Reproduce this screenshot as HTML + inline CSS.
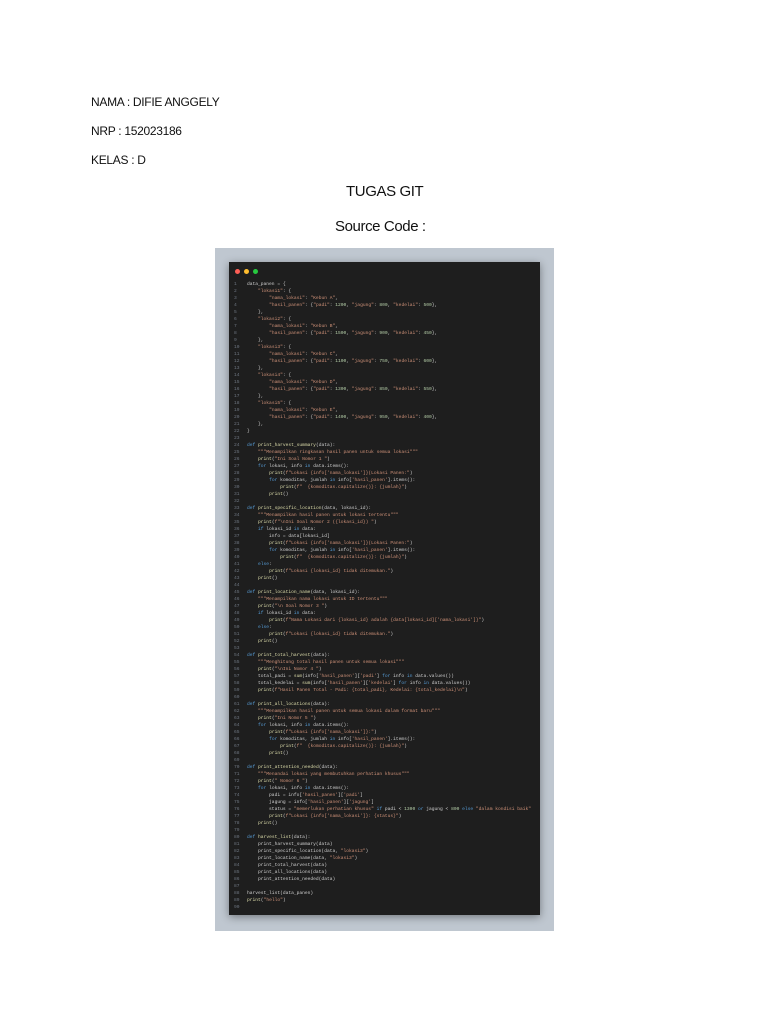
<!DOCTYPE html>
<html><head><meta charset="utf-8"><style>
body{margin:0;width:768px;height:1024px;background:#fff;position:relative;font-family:"Liberation Sans",sans-serif;overflow:hidden}
.t{position:absolute;color:#111;white-space:nowrap}
.frame{position:absolute;left:215px;top:248px;width:339px;height:683px;background:#bfc7d0}
.win{position:absolute;left:229px;top:262px;width:311px;height:653px;background:#1e1e1e;box-shadow:0 2px 8px rgba(0,0,0,.4)}
.dot{position:absolute;top:7px;width:5px;height:5px;border-radius:50%}
pre{position:absolute;left:5px;top:19px;margin:0;font-family:"Liberation Mono",monospace;font-size:4.6px;line-height:7px;color:#cfcfcf}
.n{color:#6e7681;display:inline-block;width:13px}
.k{color:#569cd6}.s{color:#ce9178}.m{color:#b5cea8}.f{color:#dcdcaa}.c{color:#6a9955}
</style></head><body>
<div class="t" style="left:91px;top:95px;font-size:12px;letter-spacing:-0.3px">NAMA : DIFIE ANGGELY</div>
<div class="t" style="left:91px;top:124px;font-size:12px;letter-spacing:-0.3px">NRP : 152023186</div>
<div class="t" style="left:91px;top:153px;font-size:12px;letter-spacing:-0.3px">KELAS : D</div>
<div class="t" style="left:346px;top:183px;font-size:15px;letter-spacing:-0.4px">TUGAS GIT</div>
<div class="t" style="left:335px;top:218px;font-size:15px;letter-spacing:-0.4px">Source Code :</div>
<div class="frame"></div>
<div class="win">
<div class="dot" style="left:6px;background:#ff5f56"></div>
<div class="dot" style="left:15px;background:#ffbd2e"></div>
<div class="dot" style="left:24px;background:#27c93f"></div>
<pre><span class="n">1</span>data_panen = {
<span class="n">2</span>    <span class="s">"lokasi1"</span>: {
<span class="n">3</span>        <span class="s">"nama_lokasi"</span>: <span class="s">"Kebun A"</span>,
<span class="n">4</span>        <span class="s">"hasil_panen"</span>: {<span class="s">"padi"</span>: <span class="m">1200</span>, <span class="s">"jagung"</span>: <span class="m">800</span>, <span class="s">"kedelai"</span>: <span class="m">500</span>},
<span class="n">5</span>    },
<span class="n">6</span>    <span class="s">"lokasi2"</span>: {
<span class="n">7</span>        <span class="s">"nama_lokasi"</span>: <span class="s">"Kebun B"</span>,
<span class="n">8</span>        <span class="s">"hasil_panen"</span>: {<span class="s">"padi"</span>: <span class="m">1500</span>, <span class="s">"jagung"</span>: <span class="m">900</span>, <span class="s">"kedelai"</span>: <span class="m">450</span>},
<span class="n">9</span>    },
<span class="n">10</span>    <span class="s">"lokasi3"</span>: {
<span class="n">11</span>        <span class="s">"nama_lokasi"</span>: <span class="s">"Kebun C"</span>,
<span class="n">12</span>        <span class="s">"hasil_panen"</span>: {<span class="s">"padi"</span>: <span class="m">1100</span>, <span class="s">"jagung"</span>: <span class="m">750</span>, <span class="s">"kedelai"</span>: <span class="m">600</span>},
<span class="n">13</span>    },
<span class="n">14</span>    <span class="s">"lokasi4"</span>: {
<span class="n">15</span>        <span class="s">"nama_lokasi"</span>: <span class="s">"Kebun D"</span>,
<span class="n">16</span>        <span class="s">"hasil_panen"</span>: {<span class="s">"padi"</span>: <span class="m">1300</span>, <span class="s">"jagung"</span>: <span class="m">850</span>, <span class="s">"kedelai"</span>: <span class="m">550</span>},
<span class="n">17</span>    },
<span class="n">18</span>    <span class="s">"lokasi5"</span>: {
<span class="n">19</span>        <span class="s">"nama_lokasi"</span>: <span class="s">"Kebun E"</span>,
<span class="n">20</span>        <span class="s">"hasil_panen"</span>: {<span class="s">"padi"</span>: <span class="m">1400</span>, <span class="s">"jagung"</span>: <span class="m">950</span>, <span class="s">"kedelai"</span>: <span class="m">400</span>},
<span class="n">21</span>    },
<span class="n">22</span>}
<span class="n">23</span>
<span class="n">24</span><span class="k">def</span> <span class="f">print_harvest_summary</span>(data):
<span class="n">25</span>    <span class="s">"""Menampilkan ringkasan hasil panen untuk semua lokasi"""</span>
<span class="n">26</span>    <span class="f">print</span>(<span class="s">"Ini Soal Nomor 1 "</span>)
<span class="n">27</span>    <span class="k">for</span> lokasi, info <span class="k">in</span> data.items():
<span class="n">28</span>        <span class="f">print</span>(<span class="s">f"Lokasi {info['nama_lokasi']}(Lokasi Panen:"</span>)
<span class="n">29</span>        <span class="k">for</span> komoditas, jumlah <span class="k">in</span> info[<span class="s">'hasil_panen'</span>].items():
<span class="n">30</span>            <span class="f">print</span>(<span class="s">f"  {komoditas.capitalize()}: {jumlah}"</span>)
<span class="n">31</span>        <span class="f">print</span>()
<span class="n">32</span>
<span class="n">33</span><span class="k">def</span> <span class="f">print_specific_location</span>(data, lokasi_id):
<span class="n">34</span>    <span class="s">"""Menampilkan hasil panen untuk lokasi tertentu"""</span>
<span class="n">35</span>    <span class="f">print</span>(<span class="s">f"\nIni Soal Nomor 2 ({lokasi_id}) "</span>)
<span class="n">36</span>    <span class="k">if</span> lokasi_id <span class="k">in</span> data:
<span class="n">37</span>        info = data[lokasi_id]
<span class="n">38</span>        <span class="f">print</span>(<span class="s">f"Lokasi {info['nama_lokasi']}(Lokasi Panen:"</span>)
<span class="n">39</span>        <span class="k">for</span> komoditas, jumlah <span class="k">in</span> info[<span class="s">'hasil_panen'</span>].items():
<span class="n">40</span>            <span class="f">print</span>(<span class="s">f"  {komoditas.capitalize()}: {jumlah}"</span>)
<span class="n">41</span>    <span class="k">else</span>:
<span class="n">42</span>        <span class="f">print</span>(<span class="s">f"Lokasi {lokasi_id} tidak ditemukan."</span>)
<span class="n">43</span>    <span class="f">print</span>()
<span class="n">44</span>
<span class="n">45</span><span class="k">def</span> <span class="f">print_location_name</span>(data, lokasi_id):
<span class="n">46</span>    <span class="s">"""Menampilkan nama lokasi untuk ID tertentu"""</span>
<span class="n">47</span>    <span class="f">print</span>(<span class="s">"\n Soal Nomor 3 "</span>)
<span class="n">48</span>    <span class="k">if</span> lokasi_id <span class="k">in</span> data:
<span class="n">49</span>        <span class="f">print</span>(<span class="s">f"Nama Lokasi dari {lokasi_id} adalah {data[lokasi_id]['nama_lokasi']}"</span>)
<span class="n">50</span>    <span class="k">else</span>:
<span class="n">51</span>        <span class="f">print</span>(<span class="s">f"Lokasi {lokasi_id} tidak ditemukan."</span>)
<span class="n">52</span>    <span class="f">print</span>()
<span class="n">53</span>
<span class="n">54</span><span class="k">def</span> <span class="f">print_total_harvest</span>(data):
<span class="n">55</span>    <span class="s">"""Menghitung total hasil panen untuk semua lokasi"""</span>
<span class="n">56</span>    <span class="f">print</span>(<span class="s">"\nIni Nomor 4 "</span>)
<span class="n">57</span>    total_padi = <span class="f">sum</span>(info[<span class="s">'hasil_panen'</span>][<span class="s">'padi'</span>] <span class="k">for</span> info <span class="k">in</span> data.values())
<span class="n">58</span>    total_kedelai = <span class="f">sum</span>(info[<span class="s">'hasil_panen'</span>][<span class="s">'kedelai'</span>] <span class="k">for</span> info <span class="k">in</span> data.values())
<span class="n">59</span>    <span class="f">print</span>(<span class="s">f"Hasil Panen Total - Padi: {total_padi}, Kedelai: {total_kedelai}\n"</span>)
<span class="n">60</span>
<span class="n">61</span><span class="k">def</span> <span class="f">print_all_locations</span>(data):
<span class="n">62</span>    <span class="s">"""Menampilkan hasil panen untuk semua lokasi dalam format baru"""</span>
<span class="n">63</span>    <span class="f">print</span>(<span class="s">"Ini Nomor 5 "</span>)
<span class="n">64</span>    <span class="k">for</span> lokasi, info <span class="k">in</span> data.items():
<span class="n">65</span>        <span class="f">print</span>(<span class="s">f"Lokasi {info['nama_lokasi']}:"</span>)
<span class="n">66</span>        <span class="k">for</span> komoditas, jumlah <span class="k">in</span> info[<span class="s">'hasil_panen'</span>].items():
<span class="n">67</span>            <span class="f">print</span>(<span class="s">f"  {komoditas.capitalize()}: {jumlah}"</span>)
<span class="n">68</span>        <span class="f">print</span>()
<span class="n">69</span>
<span class="n">70</span><span class="k">def</span> <span class="f">print_attention_needed</span>(data):
<span class="n">71</span>    <span class="s">"""Menandai lokasi yang membutuhkan perhatian khusus"""</span>
<span class="n">72</span>    <span class="f">print</span>(<span class="s">" Nomor 6 "</span>)
<span class="n">73</span>    <span class="k">for</span> lokasi, info <span class="k">in</span> data.items():
<span class="n">74</span>        padi = info[<span class="s">'hasil_panen'</span>][<span class="s">'padi'</span>]
<span class="n">75</span>        jagung = info[<span class="s">'hasil_panen'</span>][<span class="s">'jagung'</span>]
<span class="n">76</span>        status = <span class="s">"memerlukan perhatian khusus"</span> <span class="k">if</span> padi &lt; <span class="m">1300</span> <span class="k">or</span> jagung &lt; <span class="m">800</span> <span class="k">else</span> <span class="s">"dalam kondisi baik"</span>
<span class="n">77</span>        <span class="f">print</span>(<span class="s">f"Lokasi {info['nama_lokasi']}: {status}"</span>)
<span class="n">78</span>    <span class="f">print</span>()
<span class="n">79</span>
<span class="n">80</span><span class="k">def</span> <span class="f">harvest_list</span>(data):
<span class="n">81</span>    print_harvest_summary(data)
<span class="n">82</span>    print_specific_location(data, <span class="s">"lokasi3"</span>)
<span class="n">83</span>    print_location_name(data, <span class="s">"lokasi3"</span>)
<span class="n">84</span>    print_total_harvest(data)
<span class="n">85</span>    print_all_locations(data)
<span class="n">86</span>    print_attention_needed(data)
<span class="n">87</span>
<span class="n">88</span>harvest_list(data_panen)
<span class="n">89</span><span class="f">print</span>(<span class="s">"hello"</span>)
<span class="n">90</span></pre>
</div>
</body></html>
